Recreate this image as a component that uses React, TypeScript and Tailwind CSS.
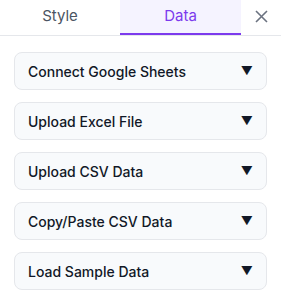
const SOURCES = [
  "Connect Google Sheets",
  "Upload Excel File",
  "Upload CSV Data",
  "Copy/Paste CSV Data",
  "Load Sample Data",
];

export default function App() {
  return (
    <div className="w-[281px] h-[299px] bg-white font-['Inter',sans-serif]">
      <div className="flex h-[36px] border-b border-[#e5e7eb]">
        <button className="w-[120px] text-[15px] text-[#4b5563] pb-[2px]">
          Style
        </button>
        <button className="w-[121px] text-[15px] text-[#7c3aed] bg-[#f5f3ff] border-b-2 border-[#7c3aed]">
          Data
        </button>
        <button className="flex-1 flex items-center justify-center pb-[3px] text-[#6b7280]">
          <svg width="13" height="13" viewBox="0 0 13 13" fill="none" stroke="currentColor" strokeWidth="1.6">
            <path d="M1 1L12 12M12 1L1 12" />
          </svg>
        </button>
      </div>
      <div className="px-[14px] pt-[16px] flex flex-col gap-[12px]">
        {SOURCES.map((s) => (
          <div
            key={s}
            className="h-[38px] flex items-center justify-between pl-[13px] pr-[13px] rounded-lg border border-[#e5e7eb] bg-[#f8fafc]"
          >
            <span className="text-[14px] font-medium text-[#111827]">{s}</span>
            <span className="text-[12px] leading-none text-[#111827]">▼</span>
          </div>
        ))}
      </div>
    </div>
  );
}
